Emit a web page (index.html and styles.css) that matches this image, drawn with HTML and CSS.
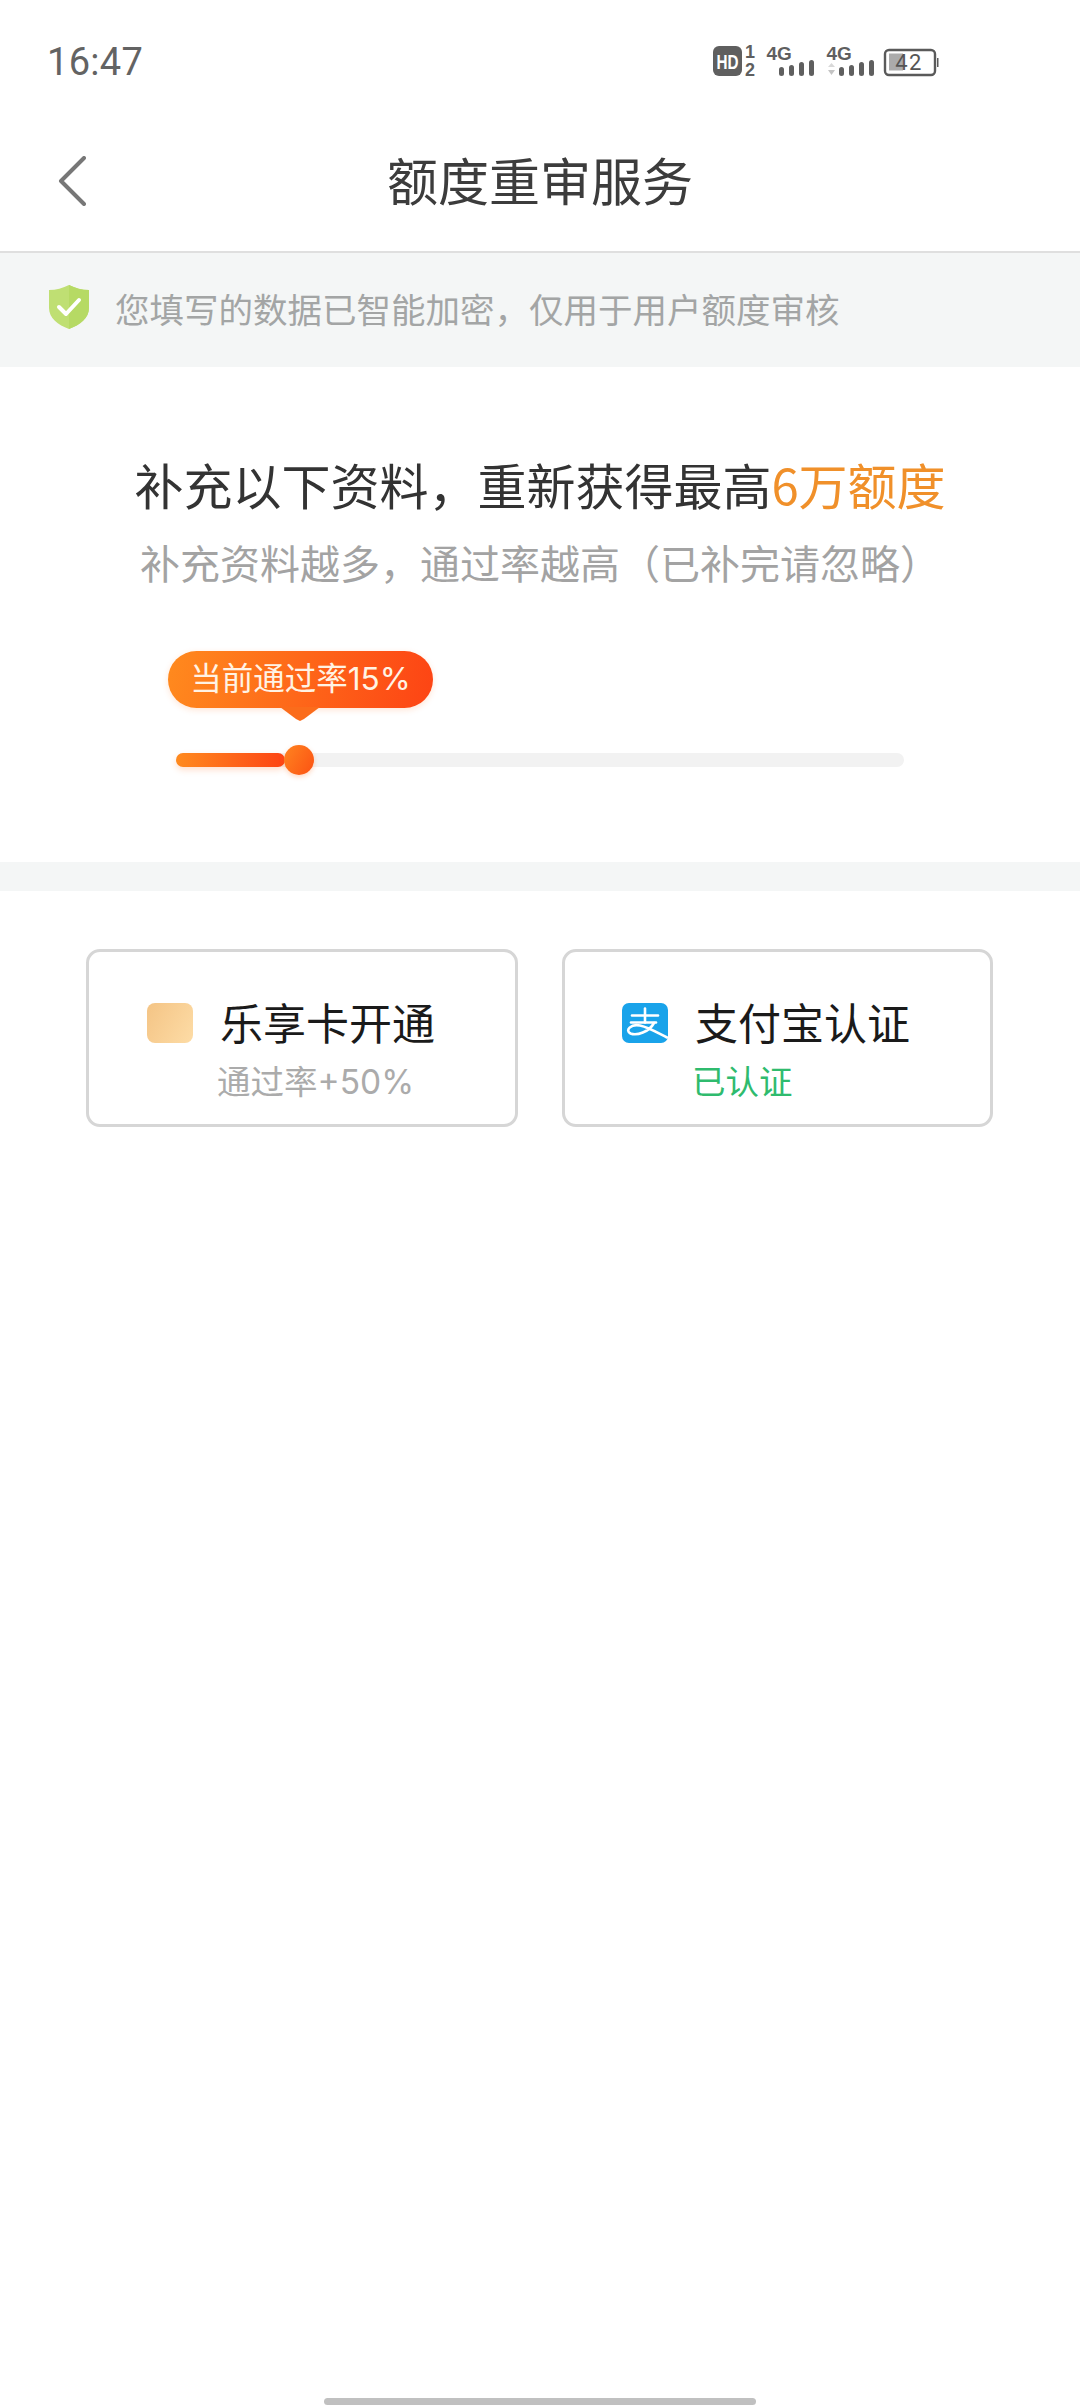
FILE: index.html
```html
<!DOCTYPE html>
<html lang="zh-CN">
<head>
<meta charset="utf-8">
<title>额度重审服务</title>
<link rel="stylesheet" href="styles.css">
</head>
<body>
<div class="page">
  <div class="status">
    <span class="time">16:47</span>
    <svg class="status-icons" width="226" height="44" viewBox="0 -6 226 44">
      <rect x="0" y="1" width="29" height="30" rx="6" fill="#5f5f5f"/>
      <text x="14.500" y="23.500" class="si-hd" text-anchor="middle" textLength="22" lengthAdjust="spacingAndGlyphs">HD</text>
      <text x="37" y="13" class="si-small" text-anchor="middle">1</text>
      <text x="37" y="31" class="si-small" text-anchor="middle">2</text>
      <text x="53.500" y="15" class="si-4g">4G</text>
      <rect x="66" y="22" width="5" height="9" rx="2.500" fill="#5f5f5f"/>
      <rect x="76" y="20" width="5" height="11" rx="2.500" fill="#5f5f5f"/>
      <rect x="86" y="17" width="5" height="14" rx="2.500" fill="#5f5f5f"/>
      <rect x="96" y="15" width="5" height="16" rx="2.500" fill="#5f5f5f"/>
      <text x="113.500" y="15" class="si-4g">4G</text>
      <path d="M115 22l3.500-4 3.500 4z" fill="#d8d8d8"/>
      <path d="M115 25l3.500 5 3.500-5z" fill="#c4c4c4"/>
      <rect x="126" y="22" width="5" height="9" rx="2.500" fill="#5f5f5f"/>
      <rect x="136" y="20" width="5" height="11" rx="2.500" fill="#5f5f5f"/>
      <rect x="146" y="17" width="5" height="14" rx="2.500" fill="#5f5f5f"/>
      <rect x="156" y="15" width="5" height="16" rx="2.500" fill="#5f5f5f"/>
      <rect x="172" y="5" width="50" height="25" rx="4" fill="none" stroke="#5a5a5a" stroke-width="2.400"/>
      <rect x="176" y="8.500" width="14" height="17" fill="#ababab"/>
      <text x="196" y="25" class="si-batt" text-anchor="middle">42</text>
      <rect x="224" y="13" width="1.500" height="9" fill="#5a5a5a"/>
    </svg>
  </div>

  <header class="nav">
    <svg class="back" width="28" height="50" viewBox="0 0 28 50">
      <path d="M26 2L3 25l23 23" fill="none" stroke="#777" stroke-width="4" stroke-linecap="round" stroke-linejoin="round"/>
    </svg>
    <h1 class="nav-title">额度重审服务</h1>
  </header>

  <div class="notice">
    <svg class="shield" width="40" height="44" viewBox="0 0 40 44">
      <path d="M20 0C26 3 33 5 40 5v18c0 10-9 17-20 21C9 40 0 33 0 23V5C7 5 14 3 20 0z" fill="#bfdf73"/>
      <path d="M20 0C26 3 33 5 40 5v18c0 10-9 17-20 21z" fill="#b6da64"/>
      <path d="M10 22l7 7 13-14" fill="none" stroke="#fff" stroke-width="4" stroke-linecap="round" stroke-linejoin="round"/>
    </svg>
    <span class="notice-text">您填写的数据已智能加密，仅用于用户额度审核</span>
  </div>

  <section class="hero">
    <h2 class="headline">补充以下资料，重新获得最高<em class="accent">6万额度</em></h2>
    <p class="subhead">补充资料越多，通过率越高（已补完请忽略）</p>
    <div class="meter">
      <div class="bubble">当前通过率15%</div>
      <div class="track">
        <div class="fill"></div>
        <div class="knob"></div>
      </div>
    </div>
  </section>

  <div class="divider"></div>

  <section class="cards">
    <div class="card">
      <div class="card-row">
        <span class="card-icon-gold"></span>
        <span class="card-title">乐享卡开通</span>
      </div>
      <div class="card-sub">通过率+50%</div>
    </div>
    <div class="card card-alipay">
      <div class="card-row">
        <svg class="card-icon" width="46" height="40" viewBox="0 0 46 40">
          <rect width="46" height="40" rx="7" fill="#19a3ea"/>
          <g fill="none" stroke="#fff" stroke-width="2.600" stroke-linecap="round">
            <path d="M10 12.500h26"/>
            <path d="M23 5.500v14"/>
            <path d="M9 19.500h25"/>
            <path d="M32 20C27 29 15 33 8.500 30.500C2.500 27.500 9 20.500 18 22.500C27 24.500 36 30 45 34.500"/>
          </g>
        </svg>
        <span class="card-title">支付宝认证</span>
      </div>
      <div class="card-sub card-sub-ok">已认证</div>
    </div>
  </section>

  <div class="home-bar"></div>
</div>
</body>
</html>
```
FILE: styles.css
```css
* { box-sizing: border-box; }
html, body { margin: 0; padding: 0; background: #fff; }
body { font-family: "Noto Sans CJK SC", "Noto Sans", sans-serif; }

.page {
  width: 1080px;
  height: 2408px;
  display: flex;
  flex-direction: column;
  background: #fff;
  overflow: hidden;
}

/* status bar */
.status {
  height: 112px;
  padding: 40px 141px 0 47px;
  display: flex;
  justify-content: space-between;
  align-items: flex-start;
}
.time {
  font-family: Roboto, sans-serif;
  font-size: 38px;
  line-height: 44px;
  color: #636363;
  letter-spacing: 0.3px;
}
.status-icons { display: block; margin-top: -1px; }
.si-hd { font: 700 20px "Liberation Sans", sans-serif; fill: #fff; }
.si-small { font: 700 18px "Liberation Sans", sans-serif; fill: #5f5f5f; }
.si-4g { font: 700 19px "Liberation Sans", sans-serif; fill: #5f5f5f; }
.si-batt { font: 400 22px Roboto, sans-serif; fill: #555; letter-spacing: 1.500px; }

/* navigation */
.nav {
  height: 141px;
  flex: none;
  display: flex;
  align-items: center;
  justify-content: center;
  position: relative;
  border-bottom: 2px solid #dfdfdf;
}
.back { position: absolute; left: 58px; top: 44px; }
.nav-title {
  margin: 0 0 6px;
  font-size: 51px;
  line-height: 70px;
  font-weight: 400;
  color: #3c3c3c;
}

/* notice */
.notice {
  height: 114px;
  flex: none;
  background: #f4f6f6;
  padding: 0 0 0 49px;
  display: flex;
  align-items: center;
  gap: 26px;
}
.shield { display: block; margin-top: -6px; }
.notice-text { font-size: 34.500px; line-height: 50px; color: #a3a5a5; margin-bottom: 5px; }

/* hero */
.hero {
  height: 495px;
  flex: none;
  padding-top: 81px;
  display: flex;
  flex-direction: column;
  align-items: center;
}
.headline {
  margin: 0;
  font-size: 49px;
  line-height: 72px;
  font-weight: 400;
  color: #333;
}
.accent { font-style: normal; color: #f0902a; }
.subhead {
  margin: 14px 0 0;
  font-size: 40px;
  line-height: 56px;
  color: #a3a3a3;
  text-spacing-trim: space-all;
  font-kerning: none;
  font-feature-settings: "chws" 0, "halt" 0, "palt" 0, "kern" 0;
}
.meter {
  align-self: stretch;
  padding: 61px 176px 0;
}
.bubble {
  position: relative;
  width: 265px;
  height: 57px;
  margin-left: -8px;
  border-radius: 29px;
  background: linear-gradient(100deg, #ff8a1e, #fd4414);
  color: #fff3e4;
  font-family: Inter, "Noto Sans CJK SC", sans-serif;
  font-size: 31.500px;
  line-height: 55px;
  text-align: center;
  box-shadow: 0 2px 6px rgba(255, 110, 30, 0.18);
}
.bubble::after {
  content: "";
  position: absolute;
  left: 112px;
  top: 56px;
  width: 40px;
  height: 14px;
  background: #fb6c1b;
  clip-path: polygon(0 0, 100% 0, 60% 85%, 50% 100%, 40% 85%);
}
.track {
  position: relative;
  height: 14px;
  margin-top: 45px;
  width: 728px;
  border-radius: 7px;
  background: #f2f2f2;
}
.fill {
  width: 109px;
  height: 14px;
  border-radius: 7px;
  background: linear-gradient(90deg, #ff8a1e, #fd4414);
  box-shadow: 0 3px 6px rgba(255, 110, 30, 0.22);
}
.knob {
  position: absolute;
  left: 108px;
  top: -8px;
  width: 30px;
  height: 30px;
  border-radius: 50%;
  background: linear-gradient(120deg, #ff8420, #fc5213);
  box-shadow: 0 2px 5px rgba(255, 110, 30, 0.28);
}

.divider { height: 29px; flex: none; background: #f4f6f6; }

/* cards */
.cards {
  padding: 58px 87px 0 86px;
  display: grid;
  grid-template-columns: 432px 431px;
  gap: 44px;
}
.card {
  height: 178px;
  border: 3px solid #d6d6d6;
  border-radius: 14px;
  padding: 44px 0 0 58px;
}
.card-alipay { padding-left: 57px; }
.card-row { display: flex; align-items: center; gap: 27px; height: 54px; }
.card-icon-gold {
  width: 46px;
  height: 40px;
  flex: none;
  border-radius: 8px;
  background: linear-gradient(120deg, #f4c485, #fddca6);
}
.card-icon { display: block; flex: none; }
.card-title { font-size: 43px; line-height: 54px; color: #1a1a1a; margin-bottom: 5px; }
.card-sub {
  margin: 9px 0 0 70px;
  font-family: Inter, "Noto Sans CJK SC", sans-serif;
  font-size: 33.500px;
  line-height: 46px;
  color: #ababab;
}
.card-sub-ok { color: #2fbb6e; }

/* home indicator */
.home-bar {
  width: 432px;
  height: 7px;
  margin: auto auto 3px;
  flex: none;
  border-radius: 4px;
  background: #c0c0c0;
}
```
